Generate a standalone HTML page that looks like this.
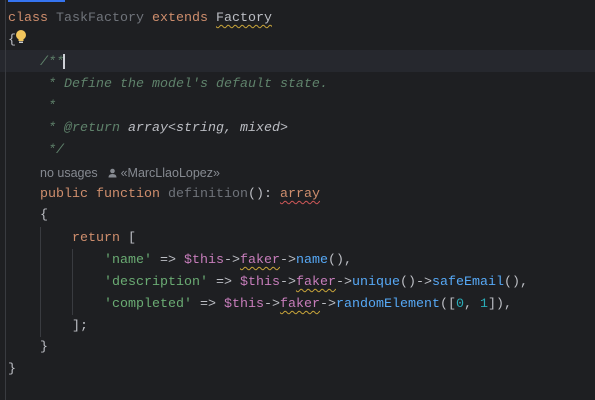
<!DOCTYPE html>
<html><head><style>
html,body{margin:0;padding:0;}
body{width:595px;height:400px;background:#1e1f22;position:relative;overflow:hidden;font-family:"Liberation Mono",monospace;font-size:13.33px;color:#bcbec4;}
.l{position:absolute;left:8px;white-space:pre;height:22px;line-height:22px;}
.k{color:#cf8e6d}.g{color:#6f737a}.c{color:#5f826b;font-style:italic}.cd{color:#bcbec4;font-style:italic}
.s{color:#6aab73}.v{color:#c77dbb}.m{color:#56a8f5}.n{color:#2aacb8}
.wy{text-decoration:underline wavy #c9a53a;text-decoration-thickness:1px;text-underline-offset:3px}
.wr{text-decoration:underline wavy #d05858;text-decoration-thickness:1px;text-underline-offset:3px}
.hint{font-family:"Liberation Sans",sans-serif;font-size:12.5px;color:#868a91}
</style></head><body>
<div style="position:absolute;left:0;top:50px;width:595px;height:22px;background:#26282e"></div>
<div style="position:absolute;left:5px;top:0;width:1px;height:400px;background:#393b40"></div>
<div style="position:absolute;left:8px;top:0;width:57px;height:2px;background:#3574f0"></div>
<div style="position:absolute;left:40px;top:227px;width:1px;height:110px;background:#393b40"></div>
<div style="position:absolute;left:72px;top:249px;width:1px;height:66px;background:#393b40"></div>
<div class="l" style="top:8px"><span class="k">class</span> <span class="g">TaskFactory</span> <span class="k">extends</span> <span class="wy">Factory</span></div>
<div class="l" style="top:30px">{</div>
<svg style="position:absolute;left:14px;top:29px" width="14" height="16" viewBox="0 0 14 16"><circle cx="7" cy="6" r="5" fill="#f2c55c"/><rect x="4.5" y="10" width="5" height="2" fill="#f2c55c"/><rect x="5" y="12.5" width="4" height="1.5" fill="#ccc"/></svg>
<div class="l" style="top:52px"><span class="c">    /**</span></div>
<div style="position:absolute;left:63px;top:54px;width:2px;height:15px;background:#ced0d6"></div>
<div class="l" style="top:74px"><span class="c">     * Define the model's default state.</span></div>
<div class="l" style="top:96px"><span class="c">     *</span></div>
<div class="l" style="top:118px"><span class="c">     * @return </span><span class="cd">array&lt;string, mixed&gt;</span></div>
<div class="l" style="top:140px"><span class="c">     */</span></div>
<div class="l hint" style="top:162px;left:40px">no usages &nbsp;&nbsp;<svg width="9" height="10" viewBox="0 0 9 10" style="vertical-align:-1px"><circle cx="4.5" cy="3" r="2.3" fill="#868a91"/><path d="M0.5 9.5 Q0.5 6 4.5 6 Q8.5 6 8.5 9.5 Z" fill="#868a91"/></svg> «MarcLlaoLopez»</div>
<div class="l" style="top:184px">    <span class="k">public function</span> <span class="g">definition</span>(): <span class="k wr">array</span></div>
<div class="l" style="top:205px">    {</div>
<div class="l" style="top:228px">        <span class="k">return</span> [</div>
<div class="l" style="top:250px">            <span class="s">'name'</span> =&gt; <span class="v">$this</span>-&gt;<span class="v wy">faker</span>-&gt;<span class="m">name</span>(),</div>
<div class="l" style="top:272px">            <span class="s">'description'</span> =&gt; <span class="v">$this</span>-&gt;<span class="v wy">faker</span>-&gt;<span class="m">unique</span>()-&gt;<span class="m">safeEmail</span>(),</div>
<div class="l" style="top:294px">            <span class="s">'completed'</span> =&gt; <span class="v">$this</span>-&gt;<span class="v wy">faker</span>-&gt;<span class="m">randomElement</span>([<span class="n">0</span>, <span class="n">1</span>]),</div>
<div class="l" style="top:316px">        ];</div>
<div class="l" style="top:337px">    }</div>
<div class="l" style="top:359px">}</div>
</body></html>
